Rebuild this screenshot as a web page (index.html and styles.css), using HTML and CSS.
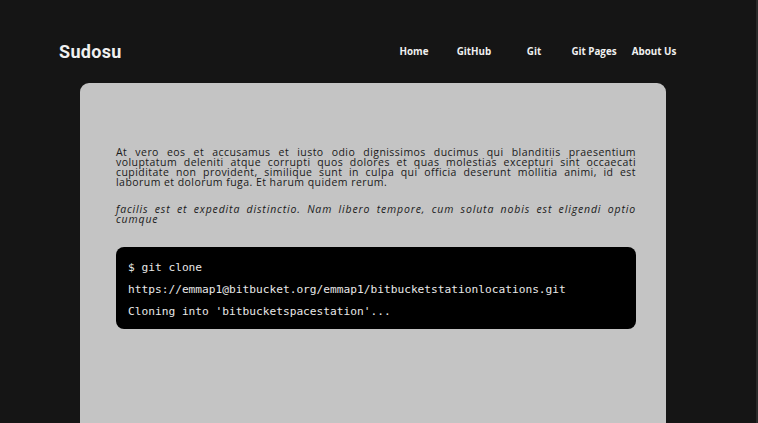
FILE: index.html
```html
<!DOCTYPE html>
<html>
<head>
<meta charset="utf-8">
<link rel="stylesheet" href="styles.css">
</head>
<body>
<header class="header">
  <div class="logo">Sudosu</div>
  <nav class="nav">
    <a class="nav-link" href="#">Home</a>
    <a class="nav-link" href="#">GitHub</a>
    <a class="nav-link" href="#">Git</a>
    <a class="nav-link" href="#">Git Pages</a>
    <a class="nav-link" href="#">About Us</a>
  </nav>
</header>
<main class="card">
  <p class="text">At vero eos et accusamus et iusto odio dignissimos ducimus qui blanditiis praesentium voluptatum deleniti atque corrupti quos dolores et quas molestias excepturi sint occaecati cupiditate non provident, similique sunt in culpa qui officia deserunt mollitia animi, id est laborum et dolorum fuga. Et harum quidem rerum.</p>
  <p class="text italic">facilis est et expedita distinctio. Nam libero tempore, cum soluta nobis est eligendi optio cumque</p>
  <div class="code">
    <div class="code-line">$ git clone</div>
    <div class="code-line">https://emmap1@bitbucket.org/emmap1/bitbucketstationlocations.git</div>
    <div class="code-line">Cloning into 'bitbucketspacestation'...</div>
  </div>
</main>
</body>
</html>
```
FILE: styles.css
```css
html, body {
  margin: 0;
  padding: 0;
  height: 100%;
  overflow: hidden;
}
body {
  background: #151515;
  border-right: 2px solid #2a2a2a;
  box-sizing: border-box;
}
.header {
  display: flex;
  align-items: center;
  justify-content: space-between;
  height: 83px;
  padding: 20px 72px 0 59px;
  box-sizing: border-box;
}
.logo {
  font-family: Roboto, "Liberation Sans", sans-serif;
  font-weight: 700;
  font-size: 18px;
  color: #f0f0f0;
  letter-spacing: 0.3px;
}
.nav {
  display: flex;
}
.nav-link {
  width: 60px;
  text-align: center;
  font-family: "Open Sans", "DejaVu Sans", sans-serif;
  font-weight: 700;
  font-size: 9.8px;
  color: #f0f0f0;
  text-decoration: none;
}
.card {
  margin-left: 80px;
  width: 586px;
  height: 400px;
  background: #c4c4c4;
  border-radius: 9px 9px 0 0;
  padding: 64px 30px 0 36px;
  box-sizing: border-box;
}
.text {
  margin: 0 0 17px 0;
  width: 520px;
  font-family: "Open Sans", "DejaVu Sans", sans-serif;
  font-size: 10.5px;
  letter-spacing: 0.45px;
  line-height: 10px;
  color: #1a1a1a;
  text-align: justify;
}
.italic {
  font-style: italic;
  letter-spacing: 0.85px;
  margin-bottom: 23px;
}
.code {
  width: 520px;
  background: #000;
  border-radius: 8px;
  padding: 13px 12px 9px 12px;
  box-sizing: border-box;
  display: flex;
  flex-direction: column;
  gap: 6px;
}
.code-line {
  font-family: "DejaVu Sans Mono", "Liberation Mono", monospace;
  font-size: 11.2px;
  line-height: 16px;
  color: #e8e8e8;
}
```
